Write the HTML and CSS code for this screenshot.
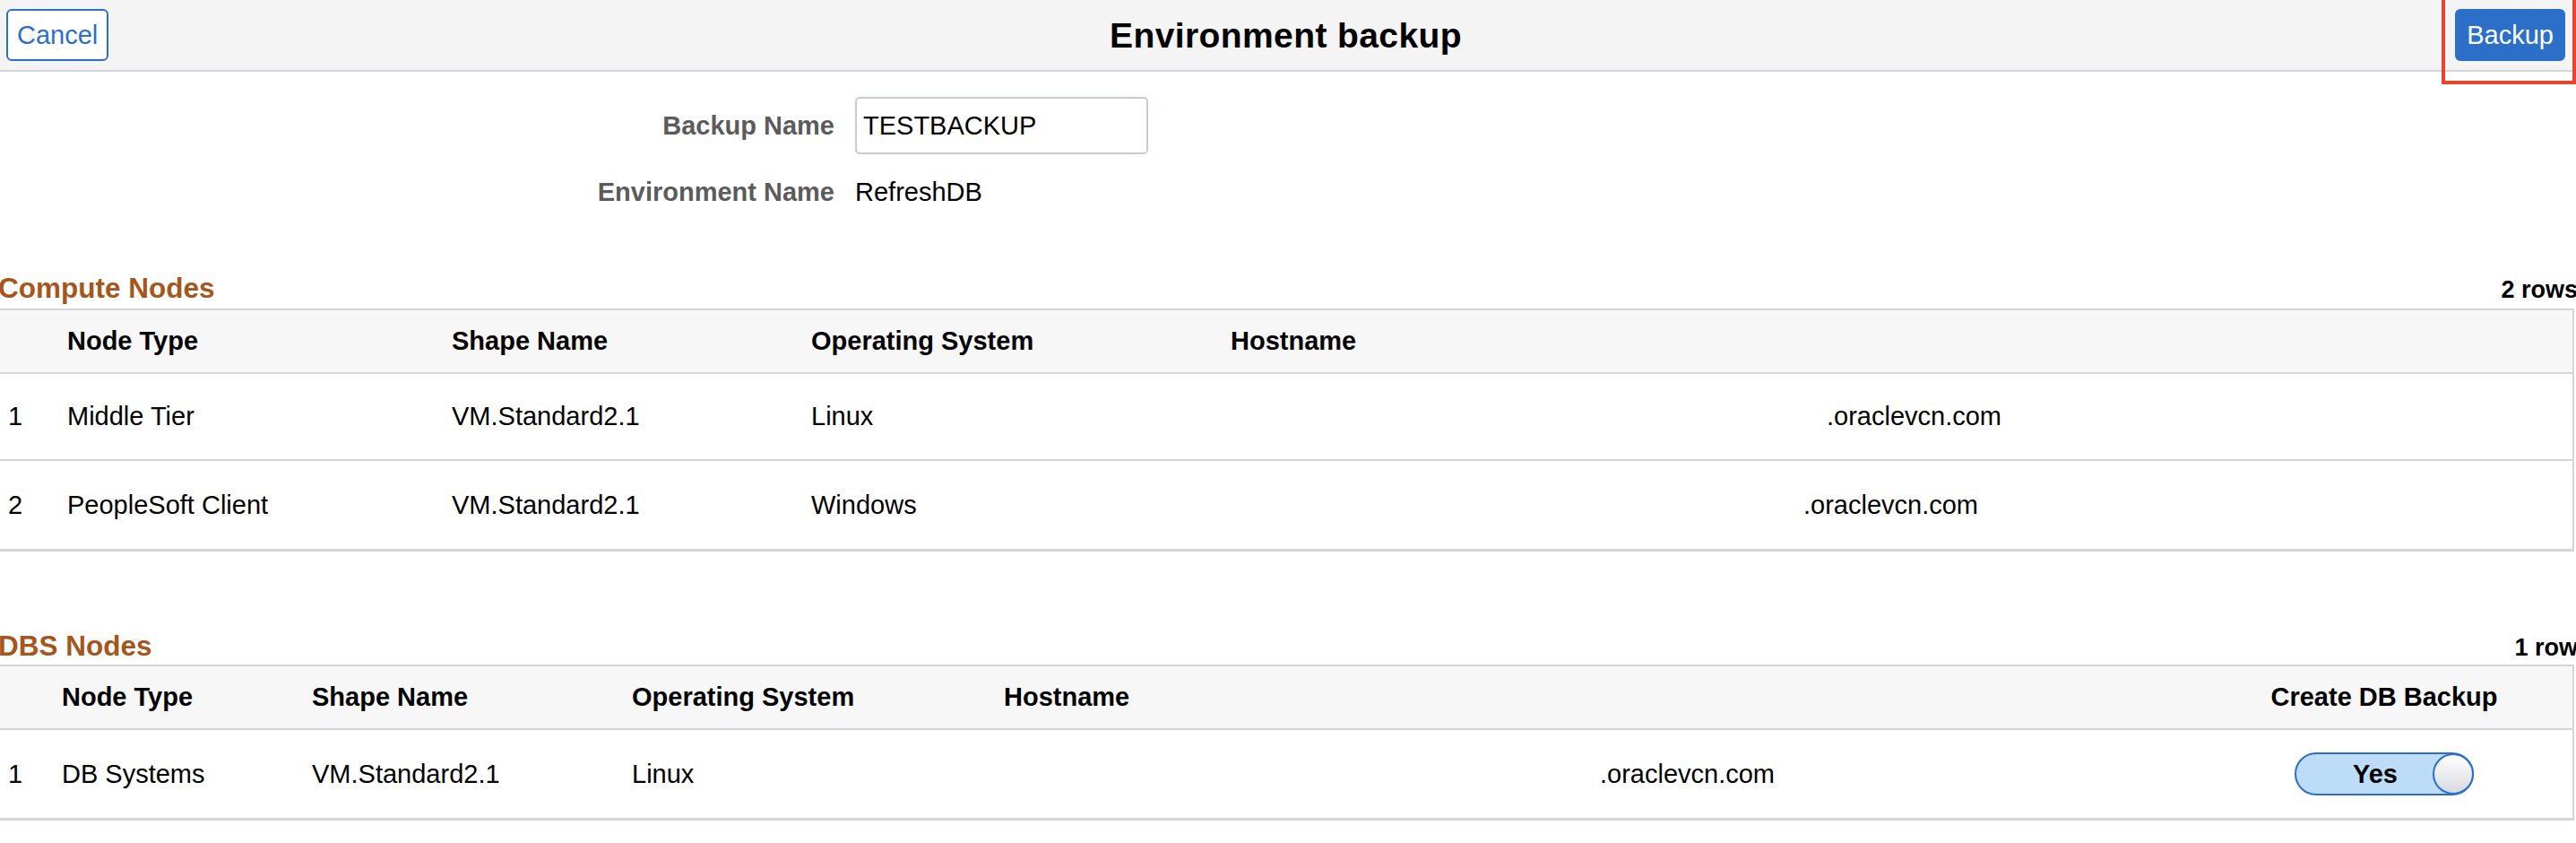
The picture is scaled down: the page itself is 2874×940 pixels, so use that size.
FILE: index.html
```html
<!DOCTYPE html>
<html lang="en">
<head>
<meta charset="utf-8">
<title>Environment backup</title>
<link rel="stylesheet" href="styles.css">
</head>
<body>
<div class="page">
  <header class="topbar">
    <button class="btn btn-outline" type="button">Cancel</button>
    <h1 class="page-title">Environment backup</h1>
    <button class="btn btn-primary" type="button">Backup</button>
    <span class="highlight-box"></span>
  </header>

  <div class="form">
    <label class="form-label" for="backupName">Backup Name</label>
    <div class="form-value"><input id="backupName" class="text-input" type="text" value="TESTBACKUP"></div>
    <span class="form-label">Environment Name</span>
    <div class="form-value">RefreshDB</div>
  </div>

  <section class="grid-section compute">
    <div class="section-head">
      <h2 class="section-title">Compute Nodes</h2>
      <span class="row-count">2 rows</span>
    </div>
    <table class="grid">
      <colgroup>
        <col class="c-num-a"><col class="c-type-a"><col class="c-shape-a"><col class="c-os-a"><col>
      </colgroup>
      <thead>
        <tr><th></th><th>Node Type</th><th>Shape Name</th><th>Operating System</th><th class="last">Hostname</th></tr>
      </thead>
      <tbody>
        <tr><td class="num">1</td><td>Middle Tier</td><td>VM.Standard2.1</td><td>Linux</td><td class="last"><span class="mask mask-a"></span>.oraclevcn.com</td></tr>
        <tr class="final"><td class="num">2</td><td>PeopleSoft Client</td><td>VM.Standard2.1</td><td>Windows</td><td class="last"><span class="mask mask-b"></span>.oraclevcn.com</td></tr>
      </tbody>
    </table>
  </section>

  <section class="grid-section dbs">
    <div class="section-head">
      <h2 class="section-title">DBS Nodes</h2>
      <span class="row-count">1 row</span>
    </div>
    <table class="grid">
      <colgroup>
        <col class="c-num-b"><col class="c-type-b"><col class="c-shape-b"><col class="c-os-b"><col class="c-host-b"><col>
      </colgroup>
      <thead>
        <tr><th></th><th>Node Type</th><th>Shape Name</th><th>Operating System</th><th>Hostname</th><th class="last center">Create DB Backup</th></tr>
      </thead>
      <tbody>
        <tr class="final"><td class="num">1</td><td>DB Systems</td><td>VM.Standard2.1</td><td>Linux</td><td><span class="mask mask-a"></span>.oraclevcn.com</td><td class="last center"><span class="toggle"><span class="toggle-label">Yes</span><span class="toggle-knob"></span></span></td></tr>
      </tbody>
    </table>
  </section>
</div>
</body>
</html>
```
FILE: styles.css
```css
* { box-sizing: border-box; }

html, body {
  margin: 0;
  padding: 0;
  background: #ffffff;
}

body {
  font-family: "Liberation Sans", Arial, Helvetica, sans-serif;
  font-size: 29px;
  color: #000000;
  overflow: hidden;
}

.page {
  width: 2874px;
}

/* ---------- top bar ---------- */
.topbar {
  position: relative;
  height: 80px;
  background: #f4f4f4;
  border-bottom: 2px solid #d2d6db;
  display: grid;
  grid-template-columns: 1fr auto 1fr;
  align-items: center;
  padding: 0 12px 0 7px;
}

.page-title {
  margin: 0;
  font-size: 39px;
  font-weight: bold;
  letter-spacing: 0.4px;
  line-height: 1;
}

.btn {
  height: 58px;
  padding: 0 10px;
  border-radius: 6px;
  border: 2px solid #2b6fc9;
  font-family: inherit;
  font-size: 29px;
  line-height: 1;
  cursor: pointer;
}

.btn-outline {
  justify-self: start;
  background: #ffffff;
  color: #2b6fc9;
}

.btn-primary {
  justify-self: end;
  background: #2b6fc9;
  color: #ffffff;
  padding: 0 11px;
}

.highlight-box {
  position: absolute;
  right: 0;
  top: -4px;
  width: 150px;
  height: 98px;
  border: 4px solid #e8452c;
  pointer-events: none;
}

/* ---------- form ---------- */
.form {
  display: grid;
  grid-template-columns: 931px 1fr;
  grid-template-rows: 64px 44px;
  column-gap: 23px;
  row-gap: 20px;
  align-items: center;
  margin-top: 28px;
}

.form-label {
  justify-self: end;
  font-weight: bold;
  color: #5b5b5b;
}

.form-value {
  color: #000000;
}

.text-input {
  width: 327px;
  height: 64px;
  border: 2px solid #c4ccd6;
  border-radius: 5px;
  padding: 0 7px;
  font-family: inherit;
  font-size: 29px;
  color: #000000;
  background: #ffffff;
}

/* ---------- grids ---------- */
.grid-section.compute { margin-top: 68px; }
.grid-section.dbs { margin-top: 88px; }

.section-head {
  display: flex;
  justify-content: space-between;
  align-items: baseline;
  height: 34px;
  line-height: 34px;
  margin-bottom: 6px;
}

.dbs .section-head {
  margin-bottom: 4px;
}

.section-title {
  margin: 0 0 0 -2px;
  font-size: 31.5px;
  font-weight: bold;
  color: #a4561d;
}

.row-count {
  font-size: 27px;
  font-weight: bold;
  margin-right: -2px;
}

.grid {
  width: 2872px;
  table-layout: fixed;
  border-collapse: separate;
  border-spacing: 0;
}

.c-num-a { width: 75px; }
.c-type-a { width: 429px; }
.c-shape-a { width: 401px; }
.c-os-a { width: 468px; }

.c-num-b { width: 69px; }
.c-type-b { width: 279px; }
.c-shape-b { width: 357px; }
.c-os-b { width: 415px; }
.c-host-b { width: 1400px; }

.grid th,
.grid td {
  padding: 0;
  text-align: left;
  vertical-align: middle;
  white-space: nowrap;
}

.grid th {
  height: 73px;
  background: #f7f7f7;
  border-top: 2px solid #d2d6db;
  border-bottom: 2px solid #d2d6db;
  font-weight: bold;
}

.grid td {
  height: 97px;
  border-bottom: 2px solid #d2d6db;
}

.grid tr.final td {
  height: 101px;
  border-bottom: 3px solid #d2d6db;
}

.grid .last {
  border-right: 2px solid #d2d6db;
}

.grid .num {
  padding-left: 9px;
}

.grid .center {
  text-align: center;
  padding-right: 70px;
}

.mask {
  display: inline-block;
}

.mask-a { width: 665px; }
.mask-b { width: 639px; }

/* ---------- toggle ---------- */
.toggle {
  display: inline-flex;
  align-items: center;
  width: 200px;
  height: 48px;
  border: 2px solid #2b6fc9;
  border-radius: 24px;
  background: #bddcf7;
  vertical-align: middle;
}

.toggle-label {
  flex: 1;
  text-align: center;
  padding-left: 24px;
  font-weight: bold;
  font-size: 29px;
  line-height: 1;
}

.toggle-knob {
  width: 46px;
  height: 46px;
  margin-right: -2px;
  border: 2px solid #2b6fc9;
  border-radius: 50%;
  background: linear-gradient(#ffffff, #d7dae0);
}
```
